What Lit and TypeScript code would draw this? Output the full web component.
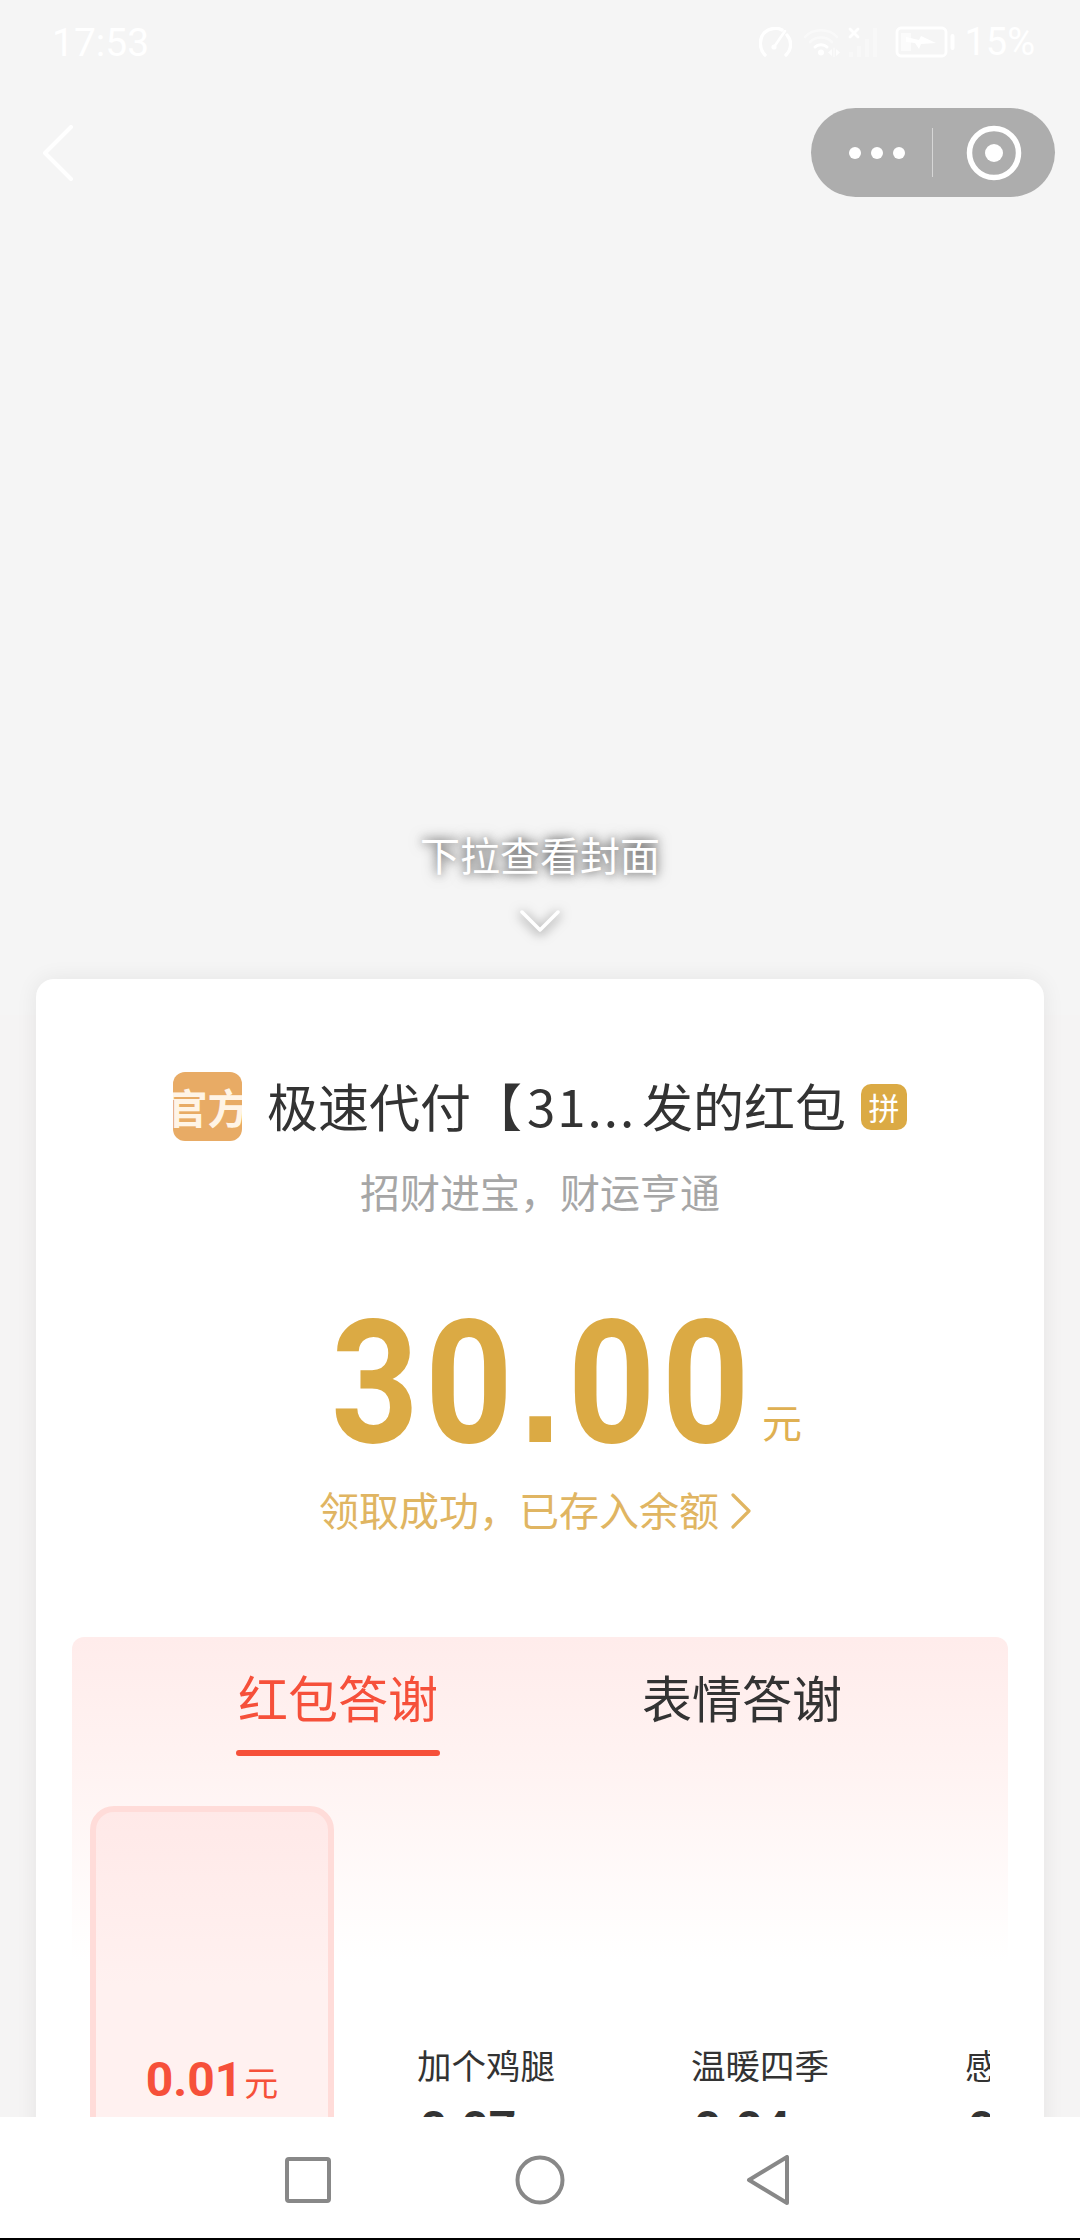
import { LitElement, html, css, svg } from "lit";
import { customElement } from "lit/decorators.js";

const items = [
  { label: "", price: "0.01", on: true },
  { label: "加个鸡腿", price: "0.07", on: false },
  { label: "温暖四季", price: "0.04", on: false },
  { label: "感谢老板", price: "0.08", on: false },
];

const wishText = "招财进宝\uFF0C财运亨通";
const okText = "领取成功\uFF0C已存入余额";

const gauge = svg`<svg width="33" height="30" viewBox="0 0 33 30" fill="none" stroke="#fff" stroke-width="3.4" stroke-linecap="round"><path d="M6 28 C0 22 0 12 5 6 C10 1 18 0 23 3"/><path d="M28 8 C33 14 33 22 27 28"/><path d="M15 20 L26 4" stroke-width="2.6"/><circle cx="15" cy="20" r="2.6" fill="#fff" stroke="none"/></svg>`;
const wifi = svg`<svg width="36" height="30" viewBox="0 0 36 30" fill="none" stroke="#fff" stroke-linecap="round"><path d="M1 10 C9 1 25 1 33 10" stroke-width="2.6" opacity=".45"/><path d="M6 15 C12 9 22 9 28 15" stroke-width="2.6" opacity=".45"/><path d="M11 20 C14 17 20 17 23 20" stroke-width="3"/><circle cx="17" cy="25.500" r="3" fill="#fff" stroke="none"/><path d="M28 22 L24 25.500 L28 29 Z M32 22 L36 25.500 L32 29 Z" fill="#fff" stroke="none" opacity=".8"/><path d="M30 21 V30" stroke-width="1" opacity=".8"/></svg>`;
const signal = svg`<svg width="34" height="31" viewBox="0 0 34 31" fill="#fff"><path d="M2 2 L10 10 M10 2 L2 10" stroke="#fff" stroke-width="2.800" stroke-linecap="round"/><rect x="1" y="25" width="4" height="5" opacity=".35"/><rect x="9" y="19" width="4" height="11" opacity=".35"/><rect x="17" y="12" width="4" height="18" opacity=".35"/><rect x="25" y="1" width="4" height="29" opacity=".35"/></svg>`;
const battery = svg`<svg width="60" height="32" viewBox="0 0 60 32" fill="none"><rect x="2" y="2" width="49" height="28" rx="4" stroke="#fff" stroke-width="2.800"/><rect x="6" y="7" width="10" height="18" fill="#fff" opacity=".55"/><path d="M11 11 L24 14 L26 10 L41 17 L26 18 L24 23 L20 17 L11 16 Z" fill="#fff"/><rect x="55.500" y="8" width="4" height="16" rx="2" fill="#fff"/></svg>`;

@customElement("app-root")
export class AppRoot extends LitElement {
  static styles = css`
    :host { display: block; width: 1080px; height: 2240px; overflow: hidden; font-family: "Noto Sans CJK SC", "Liberation Sans", sans-serif; }
    .page { height: 2240px; display: flex; flex-direction: column; background: #fff; }
    .main { height: 2117px; flex: none; overflow: hidden; background: linear-gradient(#f5f5f5 1015px, #f5f4f4 1015px); }
    .status { height: 84px; display: flex; align-items: center; justify-content: space-between; padding: 0 45px 0 52px; color: #fff; font-family: Roboto, sans-serif; font-size: 38px; }
    .time { font-size: 39px; padding-top: 2px; }
    .status-right { display: flex; align-items: center; }
    .status-right svg { display: block; flex: none; }
    .s1 { margin-right: 12px; margin-left: 2px; }
    .s2 { margin-right: 8px; }
    .s3 { margin-right: 13px; }
    .s4 { margin-right: 9px; }
    .title-bar { margin-top: 24px; height: 89px; display: flex; align-items: center; justify-content: space-between; padding: 0 25px 0 41px; }
    .back { display: block; }
    .capsule { width: 244px; height: 89px; border-radius: 45px; background: #adadad; display: flex; align-items: center; box-sizing: border-box; padding-left: 38px; }
    .dots { display: flex; gap: 10px; }
    .dots i { display: block; width: 12px; height: 12px; border-radius: 50%; background: #fff; }
    .divider { width: 1px; height: 49px; background: #d6d6d6; margin-left: 27px; }
    .target { margin-left: 33px; display: block; }
    .hint { margin-top: 629px; display: flex; flex-direction: column; align-items: center; color: #fff; font-size: 40px; line-height: 56px; text-shadow: 0 0 14px rgba(0,0,0,.6), 0 0 8px rgba(0,0,0,.35); }
    .hint svg { display: block; margin-top: 28px; filter: drop-shadow(0 2px 6px rgba(0,0,0,.55)); }
    .card { margin: 47px 36px 0; height: 1300px; background: #fff; border-radius: 18px; box-shadow: 0 0 22px rgba(0,0,0,.07); padding-top: 93px; box-sizing: border-box; display: flow-root; }
    .who { display: flex; justify-content: center; align-items: center; height: 69px; }
    .who-icon { width: 69px; height: 69px; border-radius: 12px; background: #e8ab65; color: #fff4e6; font-size: 41px; font-weight: 700; line-height: 69px; overflow: hidden; display: flex; justify-content: center; white-space: nowrap; }
    .who-icon span { display: block; flex: none; }
    .who-name { margin-left: 25px; font-size: 51px; line-height: 66px; height: 69px; color: #333; white-space: nowrap; }
    .who-name b { font-weight: 400; padding: 0 6px 0 5px; letter-spacing: 2px; }
    .pin { margin-left: 15px; width: 46px; height: 46px; border-radius: 10px; background: #dbaa44; color: #fff; font-size: 31px; line-height: 46px; text-align: center; }
    .wish { margin-top: 22px; text-align: center; font-size: 40px; line-height: 56px; color: #a6a6a6; }
    .amount { margin-top: 73px; height: 180px; display: flex; align-items: baseline; padding-left: 295px; color: #dbaa44; }
    .num { display: block; flex: none; width: 431px; font-family: Roboto, sans-serif; font-weight: 700; font-size: 173px; line-height: 180px; letter-spacing: 7px; transform: scaleX(.885); transform-origin: 0 50%; }
    .num span { font-family: "Liberation Sans", sans-serif; }
    .unit { font-size: 40px; color: #dfb052; line-height: 1; position: relative; top: -4px; }
    .ok { margin-top: 9px; padding-right: 9px; display: flex; justify-content: center; align-items: center; font-size: 40px; line-height: 56px; color: #e0b562; }
    .ok svg { display: block; margin-left: 11px; margin-top: 4px; }
    .panel { margin: 100px 36px 0; border-radius: 12px; height: 600px; padding-top: 24px; box-sizing: border-box; background: linear-gradient(#ffeceb 0, #fff3f2 130px, #fff 325px); }
    .tabs { display: flex; padding-left: 164px; gap: 200px; }
    .tab { width: 204px; text-align: center; font-size: 50px; line-height: 70px; color: #333; }
    .tab.on { color: #f6503a; }
    .tab i { display: block; height: 6px; margin-top: 19px; border-radius: 3px; }
    .tab.on i { background: #f6503a; }
    .list { margin: 50px 18px 0; display: flex; gap: 30px; overflow: hidden; }
    .item { flex: none; width: 244px; height: 400px; box-sizing: border-box; border: 6px solid transparent; border-radius: 24px; padding-top: 232px; text-align: center; }
    .item.on { padding-top: 243px; border-color: #ffdcd9; background: linear-gradient(#ffe9e8, #fff1f0 45%); }
    .label { font-size: 34.500px; line-height: 40px; color: #333; white-space: nowrap; }
    .price { font-family: Roboto, sans-serif; font-weight: 700; font-size: 48px; line-height: 50px; color: #333; margin-top: 20px; white-space: nowrap; }
    .price small { font-family: "Noto Sans CJK SC", sans-serif; font-weight: 400; font-size: 34px; margin-left: 2px; }
    .item.on .price { color: #f6503a; margin-top: 0; }
    .sysnav { height: 121px; flex: none; background: #fff; display: flex; align-items: flex-start; justify-content: center; padding: 38px 6px 0 0; box-sizing: border-box; }
    .sysnav svg { display: block; }
    .sys-gap1 { margin-left: 183px; }
    .sys-gap2 { margin-left: 181px; }
    .edge { height: 2px; flex: none; background: #000; }
  `;

  render() {
    return html`<div class="page">
      <div class="main">
        <div class="status">
          <span class="time">17:53</span>
          <div class="status-right">
            <span class="s1">${gauge}</span><span class="s2">${wifi}</span><span class="s3">${signal}</span><span class="s4">${battery}</span><span>15%</span>
          </div>
        </div>
        <div class="title-bar">
          <svg class="back" width="34" height="56" viewBox="0 0 34 56" fill="none" stroke="#fff" stroke-width="4" stroke-linecap="round" stroke-linejoin="round"><path d="M30 2 L4 28 L30 54"/></svg>
          <div class="capsule">
            <div class="dots"><i></i><i></i><i></i></div>
            <div class="divider"></div>
            <svg class="target" width="56" height="56" viewBox="0 0 56 56" fill="none"><circle cx="28" cy="28" r="24.500" stroke="#fff" stroke-width="5.500"/><circle cx="28" cy="28" r="9" fill="#fff"/></svg>
          </div>
        </div>
        <div class="hint">
          <span>下拉查看封面</span>
          <svg width="40" height="22" viewBox="0 0 40 22" fill="none" stroke="#fff" stroke-width="3.500" stroke-linecap="round" stroke-linejoin="round"><path d="M2 2 L20 20 L38 2"/></svg>
        </div>
        <div class="card">
          <div class="who">
            <div class="who-icon"><span>官方</span></div>
            <div class="who-name">极速代付【<b>31...</b>发的红包</div>
            <div class="pin">拼</div>
          </div>
          <div class="wish">${wishText}</div>
          <div class="amount"><span class="num">30<span>.</span>00</span><span class="unit">元</span></div>
          <div class="ok">${okText}<svg width="22" height="36" viewBox="0 0 22 36" fill="none" stroke="#e0b562" stroke-width="3.200" stroke-linecap="round" stroke-linejoin="round"><path d="M3 2 L19 18 L3 34"/></svg></div>
          <div class="panel">
            <div class="tabs">
              <div class="tab on">红包答谢<i></i></div>
              <div class="tab">表情答谢<i></i></div>
            </div>
            <div class="list">
              ${items.map((it) => html`<div class="item ${it.on ? "on" : ""}">
                ${it.label ? html`<div class="label">${it.label}</div>` : ""}
                <div class="price">${it.price}<small>元</small></div>
              </div>`)}
            </div>
          </div>
        </div>
      </div>
      <div class="sysnav">
        <svg width="48" height="50" viewBox="0 0 48 50" fill="none" stroke="#888" stroke-width="4"><rect x="3" y="4" width="42" height="42" rx="2"/></svg>
        <svg class="sys-gap1" width="50" height="50" viewBox="0 0 50 50" fill="none" stroke="#888" stroke-width="4"><circle cx="25" cy="25" r="22.500"/></svg>
        <svg class="sys-gap2" width="44" height="50" viewBox="0 0 44 50" fill="none" stroke="#888" stroke-width="4" stroke-linejoin="round"><path d="M41 2 V48 L3 25 Z"/></svg>
      </div>
      <div class="edge"></div>
    </div>`;
  }
}
